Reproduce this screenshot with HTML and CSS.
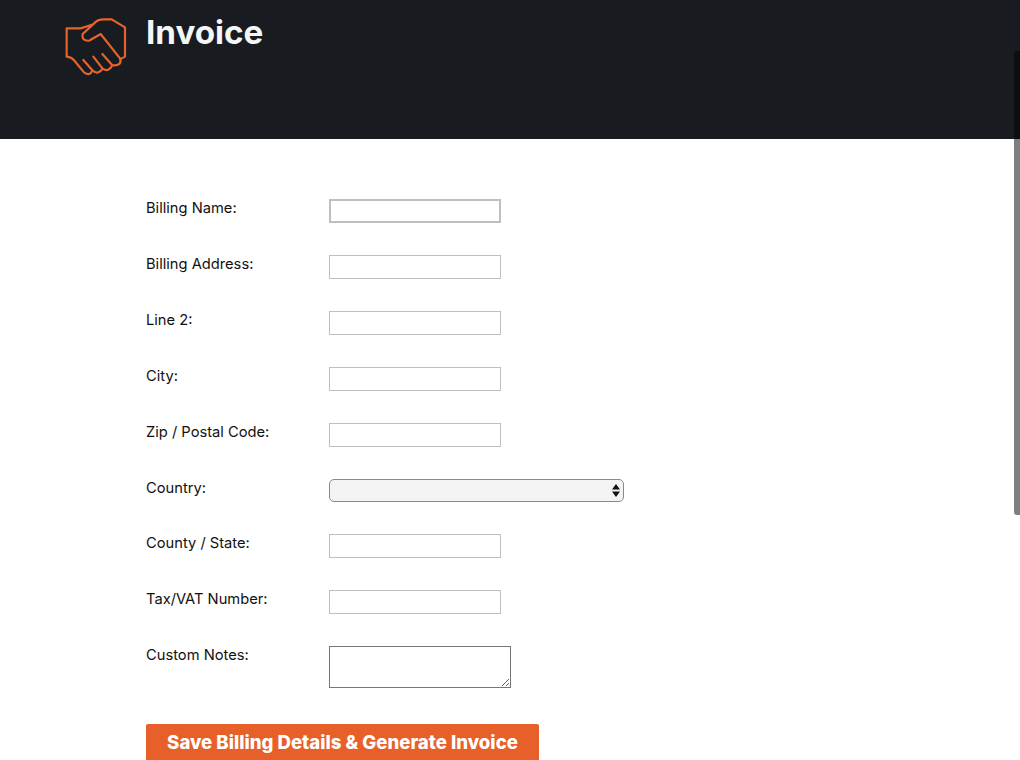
FILE: index.html
```html
<!DOCTYPE html>
<html lang="en">
<head>
<meta charset="utf-8">
<title>Invoice</title>
<link rel="stylesheet" href="styles.css">
</head>
<body>
<header class="topbar">
  <svg class="logo" viewBox="0 0 216 216" width="72" height="72" aria-hidden="true">
    <path d="M100 43 Q80 50 62 55 H20 V140 Q36 142 44 153 L72 187 Q90 200 97 181 Q114 197 128 176 Q146 188 157 166 Q188 168 180 145 L122 72 Q100 84 88 92 Q64 94 68 72 L108 35 Q115 28 130 28 H155 L195 52 V140 L180 148 M70 150 L97 181 M100 140 L128 176 M127 132 L157 166"/>
  </svg>
  <h1 class="title">Invoice</h1>
</header>
<main class="content">
  <form class="billing">
    <div class="row"><label class="label" for="n">Billing Name:</label><input class="field focused" id="n" type="text"></div>
    <div class="row"><label class="label" for="a">Billing Address:</label><input class="field" id="a" type="text"></div>
    <div class="row"><label class="label" for="l">Line 2:</label><input class="field" id="l" type="text"></div>
    <div class="row"><label class="label" for="c">City:</label><input class="field" id="c" type="text"></div>
    <div class="row"><label class="label" for="z">Zip / Postal Code:</label><input class="field" id="z" type="text"></div>
    <div class="row"><label class="label" for="y">Country:</label>
      <div class="select-wrap">
        <select class="select" id="y"><option></option></select>
        <svg class="arrows" viewBox="0 0 8 13" width="8" height="13" aria-hidden="true"><path d="M4 0 L8 5.5 H0 Z M0 7.5 H8 L4 13 Z"/></svg>
      </div>
    </div>
    <div class="row"><label class="label" for="s">County / State:</label><input class="field" id="s" type="text"></div>
    <div class="row"><label class="label" for="t">Tax/VAT Number:</label><input class="field" id="t" type="text"></div>
    <div class="row"><label class="label" for="m">Custom Notes:</label><textarea class="notes" id="m"></textarea></div>
    <button class="save" type="button">Save Billing Details &amp; Generate Invoice</button>
  </form>
</main>
<div class="scrollbar"></div>
</body>
</html>
```
FILE: styles.css
```css
html, body { margin: 0; height: 760px; overflow: hidden; background: #fff; }
body { font-family: Inter, "Liberation Sans", sans-serif; color: #111; }
.topbar { position: relative; height: 139px; background: #181c21; padding-left: 146px; box-sizing: border-box; }
.logo { position: absolute; left: 60px; top: 10px; fill: none; stroke: #e8622a; stroke-width: 6.5; stroke-linejoin: round; stroke-linecap: round; }
.title { margin: 0; padding-top: 12px; font-size: 33.2px; line-height: 40px; font-weight: 700; color: #f4f6f8; }
.content { padding: 60px 0 0 146px; }
.billing { display: flex; flex-direction: column; align-items: flex-start; }
.row { display: flex; align-items: flex-start; margin-bottom: 32px; }
.label { width: 183px; font-size: 14.7px; line-height: 18px; }
.field { box-sizing: border-box; width: 172px; height: 24px; margin: 0; padding: 0 4px; border: 1px solid #bfbfbf; background: #fff; outline: none; border-radius: 0; }
.field.focused { border: 2px solid #bfbfbf; }
.select-wrap { position: relative; width: 295px; height: 23px; }
.select { display: block; box-sizing: border-box; width: 100%; height: 23px; margin: 0; border: 1px solid #8a8a8a; border-radius: 5px; background: #f4f4f4; appearance: none; -webkit-appearance: none; }
.arrows { position: absolute; right: 4px; top: 5px; fill: #111; }
.notes { box-sizing: border-box; display: block; width: 182px; height: 42px; margin: 0; border: 1px solid #767676; border-radius: 0; background: #fff; outline: none; }
.row:has(.notes) { margin-bottom: 36px; }
.save { width: 393px; height: 42px; padding: 0 0 6px; border: 0; border-radius: 2px; background: #e86029; color: #fff; font-family: inherit; font-size: 18.6px; font-weight: 800; text-align: center; }
.scrollbar { position: absolute; top: 51px; right: 0; width: 6px; height: 464px; background: rgba(0,0,0,.5); border-radius: 3px 0 0 3px; }
```
